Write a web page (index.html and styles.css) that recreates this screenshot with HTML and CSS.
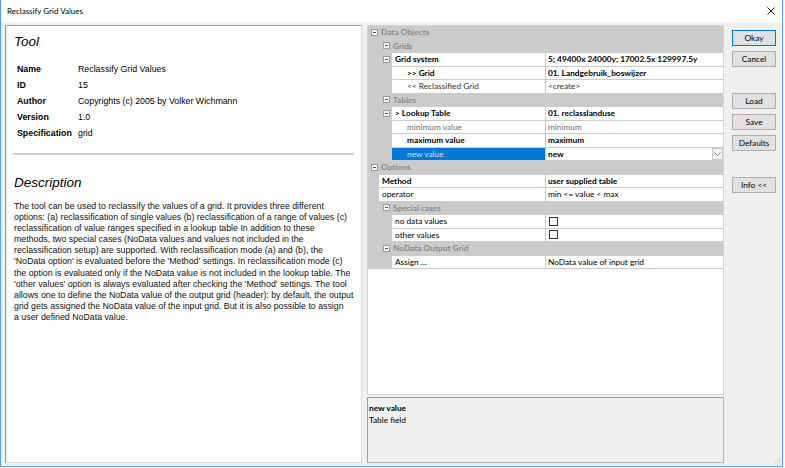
FILE: index.html
```html
<!DOCTYPE html>
<html>
<head>
<meta charset="utf-8">
<title>Reclassify Grid Values</title>
<link rel="stylesheet" href="styles.css">
</head>
<body>
<div class="window">
  <div class="titlebar">
    <span class="title">Reclassify Grid Values</span>
    <svg class="close" width="8" height="8" viewBox="0 0 8 8"><path d="M0.5 0.5L7.5 7.5M7.5 0.5L0.5 7.5" stroke="#222" stroke-width="1" fill="none"/></svg>
  </div>
  <div class="content">
    <div class="info-panel">
      <h1 class="heading">Tool</h1>
      <div class="meta">
        <span class="k">Name</span><span>Reclassify Grid Values</span>
        <span class="k">ID</span><span>15</span>
        <span class="k">Author</span><span>Copyrights (c) 2005 by Volker Wichmann</span>
        <span class="k">Version</span><span>1.0</span>
        <span class="k">Specification</span><span>grid</span>
      </div>
      <div class="rule"></div>
      <h2 class="heading desc-heading">Description</h2>
      <p class="desc">The tool can be used to reclassify the values of a grid. It provides three different<br>options: (a) reclassification of single values (b) reclassification of a range of values (c)<br>reclassification of value ranges specified in a lookup table In addition to these<br>methods, two special cases (NoData values and values not included in the<br>reclassification setup) are supported. With reclassification mode (a) and (b), the<br>'NoData option' is evaluated before the 'Method' settings. In reclassification mode (c)<br>the option is evaluated only if the NoData value is not included in the lookup table. The<br>'other values' option is always evaluated after checking the 'Method' settings. The tool<br>allows one to define the NoData value of the output grid (header): by default, the output<br>grid gets assigned the NoData value of the input grid. But it is also possible to assign<br>a user defined NoData value.</p>
    </div>
    <div class="splitter"></div>
    <div class="props">
      <div class="grid">
        <div class="row cat d0"><span class="box"></span>Data Objects</div>
        <div class="row cat d1"><span class="box"></span>Grids</div>
        <div class="row">
          <div class="label"><div class="margin m2"><span class="box"></span></div><div class="name b">Grid system</div></div>
          <div class="value b">5; 49400x 24000y; 17002.5x 129997.5y</div>
        </div>
        <div class="row">
          <div class="label"><div class="margin m2"></div><div class="name sub b">&gt;&gt; Grid</div></div>
          <div class="value b">01. Landgebruik_boswijzer</div>
        </div>
        <div class="row">
          <div class="label"><div class="margin m2"></div><div class="name sub dim">&lt;&lt; Reclassified Grid</div></div>
          <div class="value dim">&lt;create&gt;</div>
        </div>
        <div class="row cat d1"><span class="box"></span>Tables</div>
        <div class="row">
          <div class="label"><div class="margin m2"><span class="box"></span></div><div class="name b">&gt; Lookup Table</div></div>
          <div class="value b">01. reclasslanduse</div>
        </div>
        <div class="row">
          <div class="label"><div class="margin m2"></div><div class="name sub grey">minimum value</div></div>
          <div class="value grey">minimum</div>
        </div>
        <div class="row">
          <div class="label"><div class="margin m2"></div><div class="name sub b">maximum value</div></div>
          <div class="value b">maximum</div>
        </div>
        <div class="row">
          <div class="label"><div class="margin m2"></div><div class="name sub selected">new value</div></div>
          <div class="value b"><span class="vtext">new</span><span class="drop"><svg width="7" height="4" viewBox="0 0 7 4"><path d="M0.5 0.5L3.5 3.5L6.5 0.5" stroke="#8a8a8a" stroke-width="1" fill="none"/></svg></span></div>
        </div>
        <div class="row cat d0"><span class="box"></span>Options</div>
        <div class="row">
          <div class="label"><div class="margin m1"></div><div class="name b">Method</div></div>
          <div class="value b">user supplied table</div>
        </div>
        <div class="row">
          <div class="label"><div class="margin m1"></div><div class="name">operator</div></div>
          <div class="value">min &lt;= value &lt; max</div>
        </div>
        <div class="row cat d1"><span class="box"></span>Special cases</div>
        <div class="row">
          <div class="label"><div class="margin m2"></div><div class="name">no data values</div></div>
          <div class="value"><span class="check"></span></div>
        </div>
        <div class="row">
          <div class="label"><div class="margin m2"></div><div class="name">other values</div></div>
          <div class="value"><span class="check"></span></div>
        </div>
        <div class="row cat d1"><span class="box"></span>NoData Output Grid</div>
        <div class="row">
          <div class="label"><div class="margin m2"></div><div class="name">Assign ...</div></div>
          <div class="value">NoData value of input grid</div>
        </div>
      </div>
      <div class="help">
        <div class="help-title">new value</div>
        <div>Table field</div>
      </div>
    </div>
    <div class="buttons">
      <div class="btn default">Okay</div>
      <div class="btn">Cancel</div>
      <div class="btn group">Load</div>
      <div class="btn">Save</div>
      <div class="btn">Defaults</div>
      <div class="btn group">Info &lt;&lt;</div>
    </div>
    <svg class="grip" width="7" height="7" viewBox="0 0 7 7"><g fill="#b8b8b8"><rect x="5" y="0" width="1" height="1"/><rect x="3" y="2" width="1" height="1"/><rect x="5" y="2" width="1" height="1"/><rect x="1" y="4" width="1" height="1"/><rect x="3" y="4" width="1" height="1"/><rect x="5" y="4" width="1" height="1"/></g></svg>
  </div>
</div>
</body>
</html>
```

FILE: styles.css
```css
html, body {
  margin: 0;
  padding: 0;
  background: #ffffff;
}

.window {
  width: 783px;
  height: 467px;
  box-sizing: border-box;
  border: 1px solid #5a9de0;
  border-top: none;
  display: flex;
  flex-direction: column;
  background: #f0f0f0;
}

.titlebar {
  height: 22px;
  flex: none;
  background: #ffffff;
  display: flex;
  align-items: center;
  padding-left: 6px;
  font-family: Lato, "Noto Sans", sans-serif;
  font-size: 8px;
  color: #000;
}

.close {
  margin-left: auto;
  margin-right: 7px;
}

.content {
  position: relative;
  flex: 1;
  display: flex;
  padding: 3px 6px 3px 4px;
}

/* Left info panel */
.info-panel {
  width: 357px;
  box-sizing: border-box;
  background: #ffffff;
  border: 1px solid;
  border-color: #a0a0a0 #dcdcdc #dcdcdc #a0a0a0;
  box-shadow: inset 1px 0 0 #e0e0e0;
  font-family: "Liberation Sans", Arial, sans-serif;
  font-size: 8.8px;
  color: #000;
}

.heading {
  margin: 8px 0 0 8px;
  font-size: 13.5px;
  font-style: italic;
  font-weight: normal;
  line-height: 16px;
}

.meta {
  display: grid;
  grid-template-columns: 61px auto;
  grid-auto-rows: 16px;
  align-items: center;
  margin: 11px 0 0 11px;
}

.meta .k {
  font-weight: bold;
}

.rule {
  height: 2px;
  margin: 12px 7px 0 7px;
  background: #d0d0d0;
}

.desc-heading {
  margin-top: 20px;
}

.desc {
  margin: 10px 0 0 8px;
  line-height: 11.1px;
  white-space: nowrap;
  color: #111;
}

.splitter {
  width: 5px;
  flex: none;
}

/* Right property panel */
.props {
  width: 357px;
  flex: none;
  display: flex;
  flex-direction: column;
  gap: 2px;
}

.grid {
  height: 370px;
  box-sizing: border-box;
  border: 1px solid #d6d6d6;
  background: #ffffff;
  font-family: Lato, "Noto Sans", sans-serif;
  font-size: 8.3px;
  color: #000;
}

.row {
  height: 13.5px;
  box-sizing: border-box;
  display: flex;
  align-items: stretch;
  border-bottom: 1px solid #cbcbcb;
  line-height: 12.5px;
}

.row.cat {
  background: #cbcbcb;
  align-items: center;
  color: #8a8a8a;
  font-weight: bold;
  gap: 3px;
}

.cat.d0 { padding-left: 3px; }
.cat.d1 { padding-left: 15px; }

.box {
  width: 7px;
  height: 7px;
  box-sizing: border-box;
  border: 1px solid #9a9a9a;
  background: #f6f6f6;
  position: relative;
  flex: none;
}

.box::after {
  content: "";
  position: absolute;
  left: 1px;
  top: 2px;
  width: 3px;
  height: 1px;
  background: #555;
}

.label {
  width: 178px;
  flex: none;
  display: flex;
  border-right: 1px solid #cbcbcb;
  box-sizing: border-box;
}

.margin {
  flex: none;
  background: #cbcbcb;
  display: flex;
  align-items: center;
  justify-content: flex-end;
}

.margin.m1 { width: 11px; }
.margin.m2 { width: 24px; padding-right: 2px; box-sizing: border-box; }

.name {
  flex: 1;
  padding-left: 3px;
  white-space: nowrap;
  overflow: hidden;
}

.name.sub { padding-left: 15px; }

.name.selected {
  background: #0078d7;
  color: #d6e8f8;
}

.value {
  flex: 1;
  display: flex;
  align-items: center;
  padding-left: 2px;
  white-space: nowrap;
  min-width: 0;
}

.b { font-weight: bold; }
.dim { color: #333333; }
.grey { color: #6e6e6e; }

.vtext { flex: 1; }

.drop {
  width: 11px;
  height: 12px;
  box-sizing: border-box;
  border: 1px solid #c8c8c8;
  background: #f2f2f2;
  display: flex;
  align-items: center;
  justify-content: center;
  flex: none;
}

.check {
  width: 9px;
  height: 9px;
  box-sizing: border-box;
  border: 1px solid #333333;
  background: #ffffff;
  margin-left: 1px;
}

.help {
  height: 66px;
  box-sizing: border-box;
  border: 1px solid #a0a0a0;
  border-color: #a0a0a0 #b4b4b4 #b4b4b4 #a0a0a0;
  background: #f0f0f0;
  padding: 4px 0 0 1px;
  font-family: Lato, "Noto Sans", sans-serif;
  font-size: 8.3px;
  line-height: 12px;
  color: #000;
}

.help-title {
  font-weight: bold;
}

/* Buttons */
.buttons {
  margin-left: 8px;
  width: 44px;
  flex: none;
  display: flex;
  flex-direction: column;
  padding-top: 5px;
  gap: 5px;
}

.btn {
  height: 16px;
  box-sizing: border-box;
  border: 1px solid #adadad;
  background: #e1e1e1;
  display: flex;
  align-items: center;
  justify-content: center;
  font-family: Lato, "Noto Sans", sans-serif;
  font-size: 8.3px;
  color: #000;
}

.btn.default {
  border-color: #0078d7;
  box-shadow: inset 0 0 0 1px #cfe3f6;
}

.btn.group {
  margin-top: 21px;
}

.grip {
  position: absolute;
  right: 1px;
  bottom: 1px;
}
```
